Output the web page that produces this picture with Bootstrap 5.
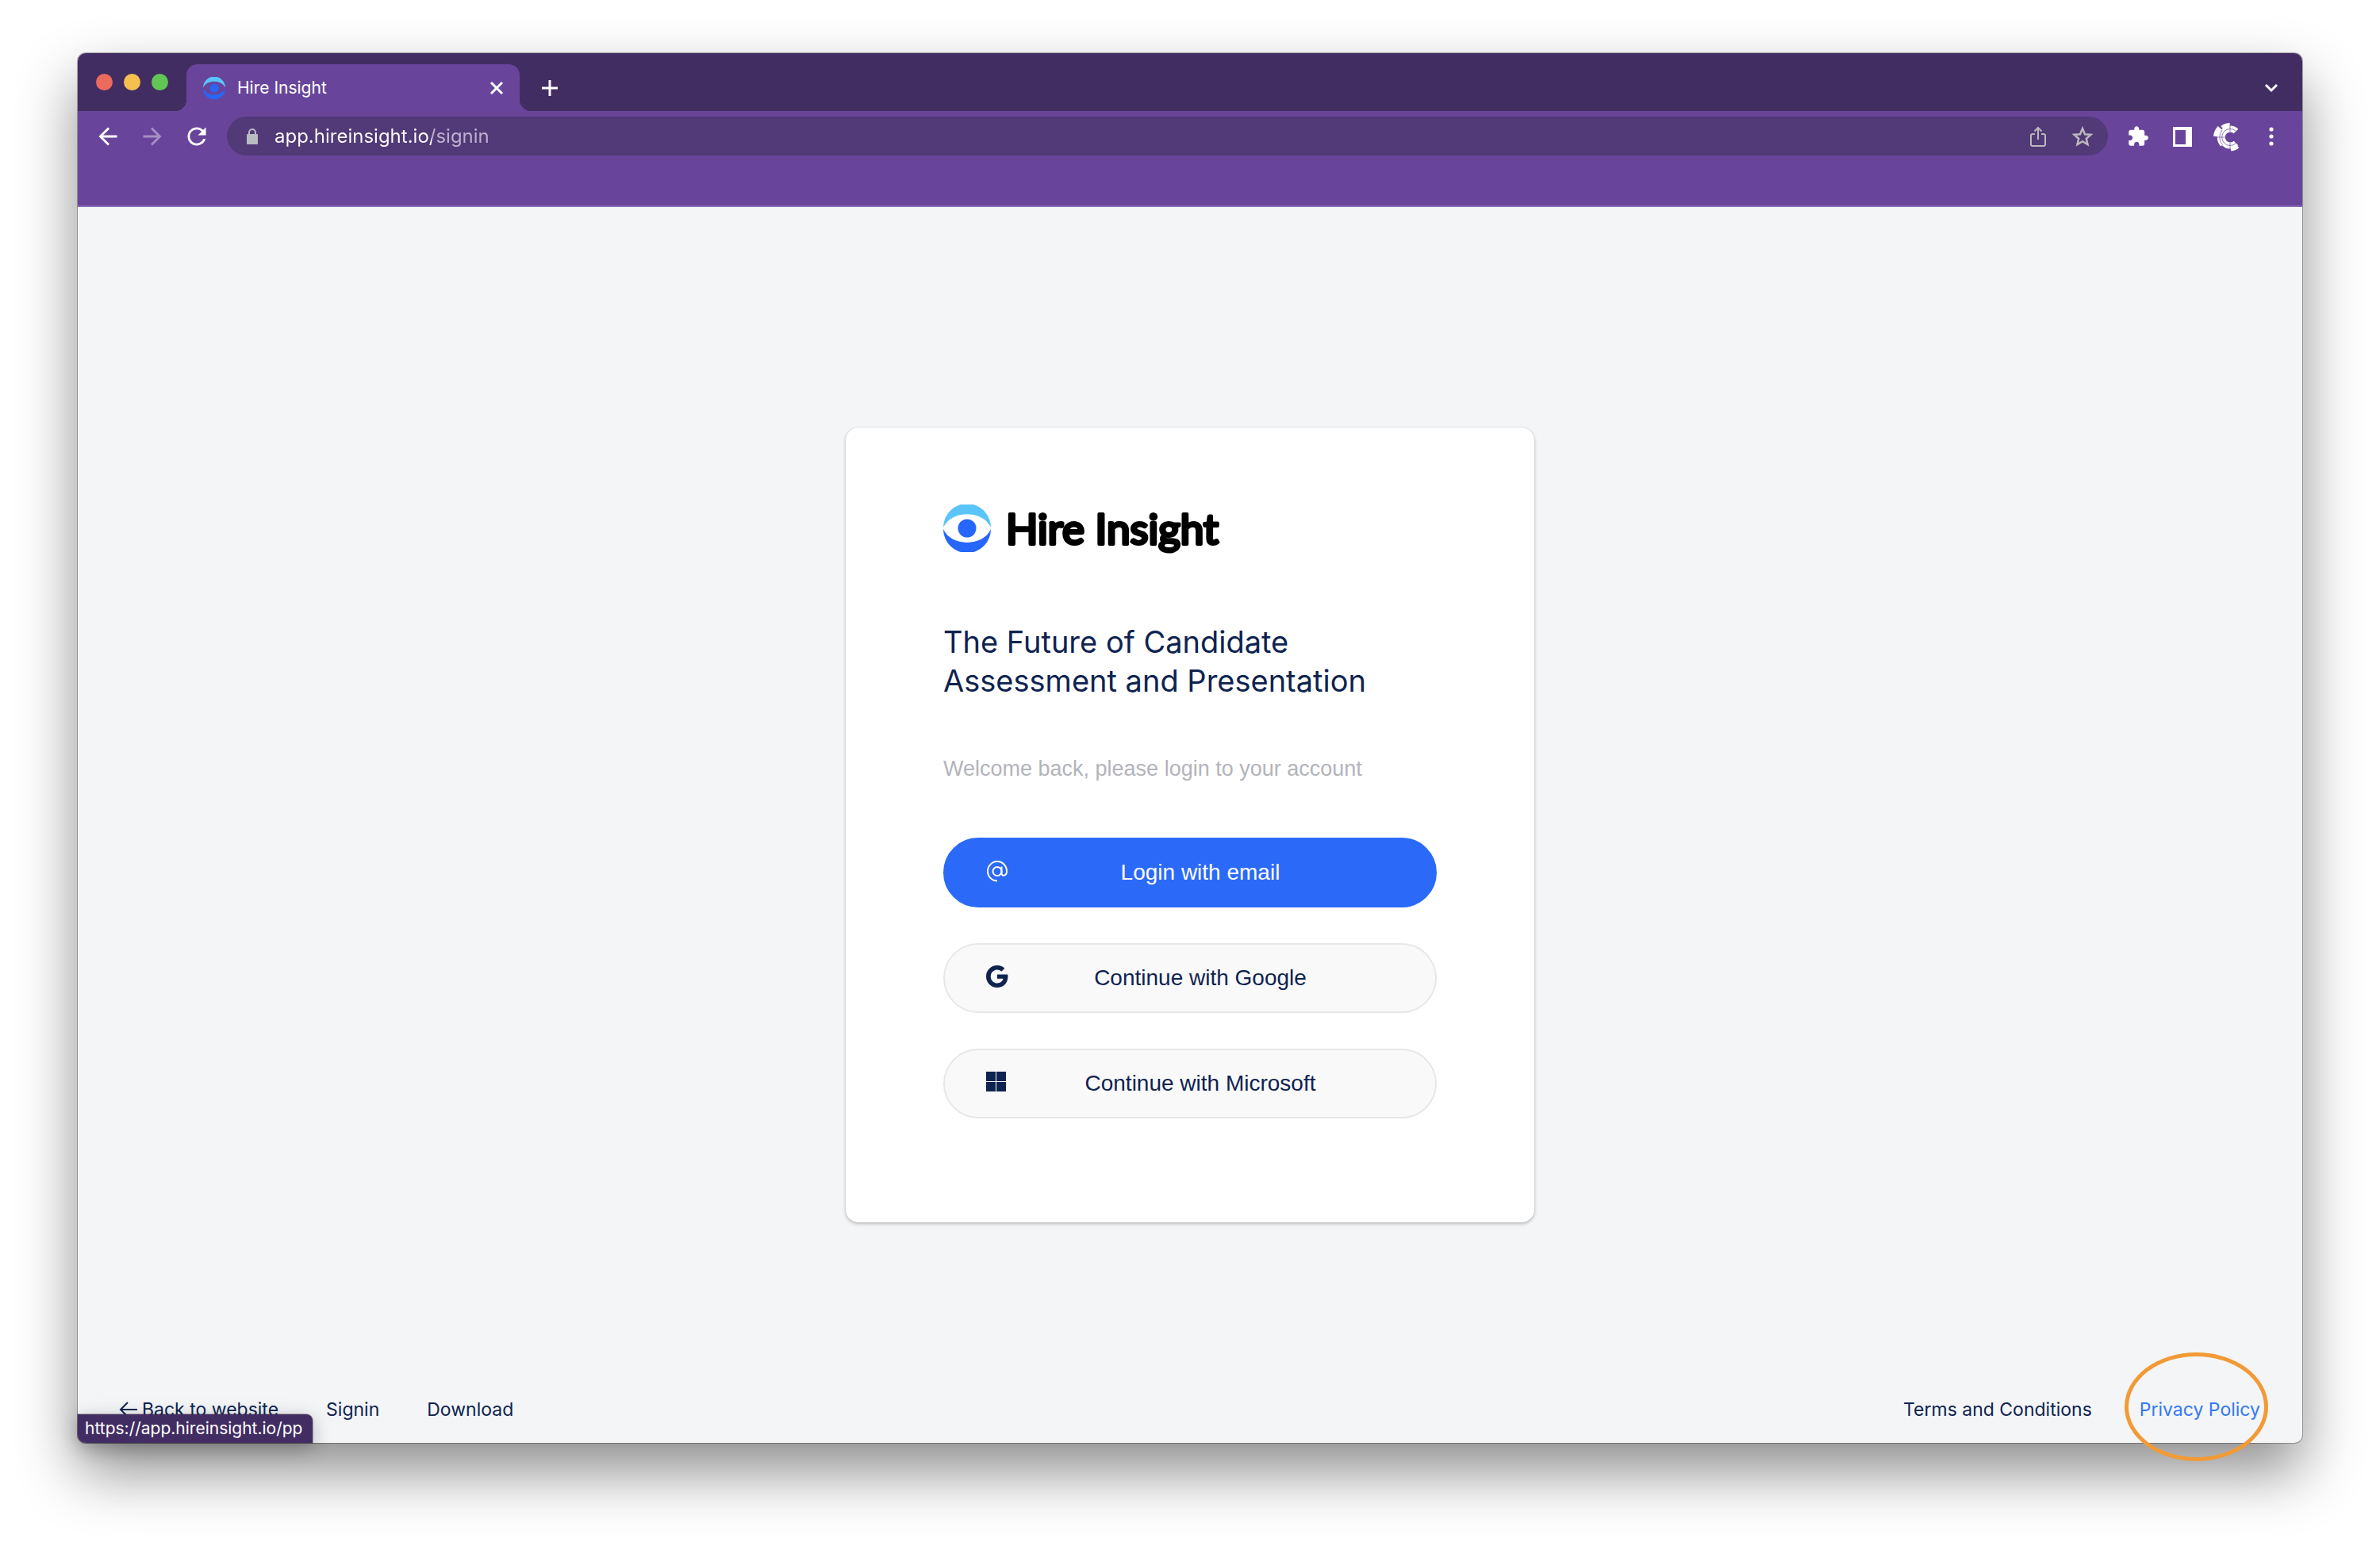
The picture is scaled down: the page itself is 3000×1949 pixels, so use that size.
<!DOCTYPE html>
<html lang="en">
<head>
<meta charset="utf-8">
<meta name="viewport" content="width=device-width, initial-scale=1">
<title>Hire Insight</title>
<link href="https://cdn.jsdelivr.net/npm/bootstrap@5.3.0/dist/css/bootstrap.min.css" rel="stylesheet">
<style>
  :root { --navy: #0f2350; --violet: #68459b; --violet-dark: #422d63; --brand: #2b6af8; }
  body { background: #fff; font-family: Inter, Roboto, sans-serif; color: var(--navy); min-height: 100vh; padding: 67px 98px 130px; }
  svg { display: block; flex: none; overflow: visible; }
  a { color: inherit; text-decoration: none; }
  .browser { border-radius: 10px; background: #f3f5f7; box-shadow: 0 0 0 1px rgba(0,0,0,.28), 0 36px 76px rgba(0,0,0,.45); }

  /* tab strip */
  .tab-strip { height: 73px; padding: 0 25px 0 23px; background: var(--violet-dark); border-radius: 10px 10px 0 0; }
  .light-dot { width: 21px; height: 21px; border-radius: 50%; }
  .lights { gap: 14px; margin-right: 23px; }
  .browser-tab { width: 420px; height: 59px; padding: 0 15px 0 21px; gap: 15px; background: var(--violet); border-radius: 14px 14px 0 0; font-size: 21px; }
  .browser-tab::before, .browser-tab::after { content: ""; position: absolute; bottom: 0; width: 14px; height: 14px; }
  .browser-tab::before { right: 100%; background: radial-gradient(circle at 0 0, transparent 14px, var(--violet) 14px); }
  .browser-tab::after { left: 100%; background: radial-gradient(circle at 100% 0, transparent 14px, var(--violet) 14px); }
  .strip-btn { height: 59px; }
  .tool-btn { padding: 0; border: 0; background: none; color: #fff; display: flex; align-items: center; }

  /* toolbar */
  .toolbar { height: 121px; padding: 7px 25px 0 24px; background: var(--violet); border-bottom: 2px solid #8a6bb3; }
  .tool-row { height: 49px; gap: 24px; }
  .tool-set { gap: 28px; }
  .address { height: 49px; padding: 0 18px; gap: 14px; border-radius: 25px; background: #523977; color: #bdb8c0; }
  .address input { border: 0; outline: 0; padding: 0; font-size: 24px; min-width: 0; color: transparent; background: linear-gradient(90deg, #fff 198px, #bfb2cf 198px); -webkit-background-clip: text; background-clip: text; }

  /* page: equal rows above and below keep the card in the middle */
  .page { display: grid; grid-template-rows: 1fr auto 1fr; min-height: calc(100vh - 391px); }
  .signin { width: 868px; max-width: 100%; padding: 97px 123px 131px; border-radius: 16px; background: #fff; box-shadow: 0 2px 4px rgba(0,0,0,.24), 0 0 2px rgba(0,0,0,.12); }
  .brand-name { font: 400 53px Lato, sans-serif; stroke: #000; stroke-width: 4px; stroke-linejoin: round; }
  .signin h1 { font: 400 38px/49px Inter, sans-serif; margin: 88px 0 66px; }
  .signin p { font: 400 27px/40px "Liberation Sans", Arial, sans-serif; color: #b3b4bb; margin-bottom: 67px; }
  .choices { gap: 45px; }
  .choice { height: 88px; padding: 0 54px 0 52px; border: 2px solid #e7e7e8; background: #f9f9f9; color: var(--navy); font: 400 28px/40px "Liberation Sans", Arial, sans-serif; }
  .choice:hover { border-color: #d5d5d8; color: var(--navy); }
  .choice-main, .choice-main:hover { background: var(--brand); border-color: var(--brand); color: #fff; }

  .page-foot { padding: 0 53px 28px; font-size: 23px; line-height: 28px; }
  .page-foot nav { gap: 60px; }
  .policy { color: #3478f6; }
  .ring { position: absolute; inset: -58px -10px -51px -19px; border: 5px solid #f29a36; border-radius: 50%; pointer-events: none; }
  .status { left: 0; bottom: 0; height: 36px; padding: 0 13px 0 9px; background: var(--violet-dark); color: #fff; font-size: 21px; line-height: 36px; border-radius: 0 8px 0 10px; box-shadow: 0 6px 24px rgba(0,0,0,.28), 0 0 0 1px rgba(0,0,0,.25); }
</style>
<script src="https://cdn.jsdelivr.net/npm/bootstrap@5.3.0/dist/js/bootstrap.bundle.min.js"></script>
</head>
<body>
<svg width="0" height="0" class="position-absolute" aria-hidden="true">
  <symbol id="eye" viewBox="0 0 60 60">
    <path d="M0 29A30 30 0 0 1 60 29C50 6.500 10 6.500 0 29Z" fill="#5ac4fb"/>
    <path d="M0 31A30 30 0 0 0 60 31C50 53.500 10 53.500 0 31Z" fill="#2766fb"/>
    <circle cx="30" cy="30" r="11.500" fill="#2766fb"/>
  </symbol>
</svg>

<div class="browser position-relative">
  <div class="tab-strip d-flex align-items-end">
    <div class="lights d-flex align-self-center">
      <span class="light-dot" style="background:#ec6b5f"></span>
      <span class="light-dot" style="background:#f5c04f"></span>
      <span class="light-dot" style="background:#62c655"></span>
    </div>
    <div class="browser-tab position-relative d-flex align-items-center text-white">
      <svg width="28" height="28" aria-hidden="true"><use href="#eye"/></svg>
      <span class="flex-grow-1">Hire Insight</span>
      <button type="button" class="tool-btn" aria-label="Close tab"><svg width="28" height="28" viewBox="0 0 28 28" stroke="#fff" stroke-width="3"><path d="M7 7L21 21M21 7L7 21"/></svg></button>
    </div>
    <button type="button" class="tool-btn strip-btn ms-4" aria-label="New tab"><svg width="28" height="28" viewBox="0 0 28 28" stroke="#fff" stroke-width="3"><path d="M14 4V24M4 14H24"/></svg></button>
    <button type="button" class="tool-btn strip-btn ms-auto" aria-label="Search tabs"><svg width="28" height="28" viewBox="0 0 28 28" fill="none" stroke="#fff" stroke-width="3"><path d="M7 10L14 17L21 10"/></svg></button>
  </div>

  <div class="toolbar">
    <div class="tool-row d-flex align-items-center">
      <div class="tool-set d-flex">
        <button type="button" class="tool-btn" aria-label="Back"><svg width="28" height="28" viewBox="2.300 2.300 19.400 19.400" fill="#fff"><path d="M20 11H7.830l5.590-5.590L12 4l-8 8 8 8 1.410-1.410L7.830 13H20v-2z"/></svg></button>
        <button type="button" class="tool-btn" aria-label="Forward"><svg width="28" height="28" viewBox="2.300 2.300 19.400 19.400" fill="#a48fc3"><path d="M4 11h12.170l-5.590-5.590L12 4l8 8-8 8-1.410-1.410L16.170 13H4v-2z"/></svg></button>
        <button type="button" class="tool-btn" aria-label="Reload"><svg width="28" height="28" viewBox="2.300 2.300 19.400 19.400" fill="#fff"><path d="M17.650 6.350C16.200 4.900 14.210 4 12 4c-4.420 0-7.990 3.580-7.990 8s3.570 8 7.990 8c3.730 0 6.840-2.550 7.730-6h-2.080c-.820 2.330-3.040 4-5.650 4-3.310 0-6-2.690-6-6s2.690-6 6-6c1.660 0 3.140.690 4.220 1.780L13 11h7V4l-2.350 2.350z"/></svg></button>
      </div>
      <div class="address d-flex align-items-center flex-grow-1">
        <svg width="28" height="28" viewBox="0 0 28 28" aria-hidden="true"><rect x="7" y="11" width="14" height="13" rx="1" fill="#b9bcc0"/><path d="M10 12V9a4 4 0 0 1 8 0v3" fill="none" stroke="#b9bcc0" stroke-width="2"/></svg>
        <input type="text" class="flex-grow-1" value="app.hireinsight.io/signin" aria-label="Address">
        <div class="tool-set d-flex">
          <button type="button" class="tool-btn" aria-label="Share"><svg width="28" height="28" viewBox="0 0 28 28" fill="none" stroke="#bdb8bd" stroke-width="2"><path d="M10 11H7a2 2 0 0 0-2 2v11a2 2 0 0 0 2 2H21a2 2 0 0 0 2-2V13a2 2 0 0 0-2-2H18M14 18V3M9.500 7.500L14 3L18.500 7.500"/></svg></button>
          <button type="button" class="tool-btn" aria-label="Bookmark"><svg width="28" height="28" viewBox="0 0 28 28" fill="none" stroke="#bdb8bd" stroke-width="2.500"><path d="M14 4L17 11.200L24.500 11.800L18.800 16.800L20.500 24.200L14 20.300L7.500 24.200L9.200 16.800L3.500 11.800L11 11.200Z"/></svg></button>
        </div>
      </div>
      <div class="tool-set d-flex align-items-center">
        <button type="button" class="tool-btn" aria-label="Extensions"><svg width="28" height="28" viewBox="0 0 24 24" fill="#fff"><path d="M20.500 11H19V7c0-1.100-.900-2-2-2h-4V3.500C13 2.120 11.880 1 10.500 1S8 2.120 8 3.500V5H4c-1.100 0-1.990.900-1.990 2v3.800H3.500c1.490 0 2.700 1.210 2.700 2.700s-1.210 2.700-2.700 2.700H2V20c0 1.100.900 2 2 2h3.800v-1.500c0-1.490 1.210-2.700 2.700-2.700 1.490 0 2.700 1.210 2.700 2.700V22H17c1.100 0 2-.900 2-2v-4h1.500c1.380 0 2.500-1.120 2.500-2.500S21.880 11 20.500 11z"/></svg></button>
        <button type="button" class="tool-btn" aria-label="Side panel"><svg width="28" height="28" viewBox="0 0 28 28"><path d="M2 2H26V27H2ZM5 6V24H18V6Z" fill="#fff" fill-rule="evenodd"/></svg></button>
        <button type="button" class="tool-btn" aria-label="Profile"><svg width="28" height="28" viewBox="-18 -15 28 28" fill="none" stroke="#fff">
          <path d="M7.500 -7.500A10.500 10.500 0 1 0 7.500 7.500" stroke-width="8"/>
          <path d="M-10 -9A14 14 0 0 0 -9.500 9.500" stroke-width="6"/>
          <path d="M9 10.700A14 14 0 0 1 1 14" stroke-width="7"/>
          <path d="M0 -15.500A15.500 15.500 0 0 0 -10 -12" stroke-width="5"/>
          <path d="M-13 -12A18 18 0 0 0 -18 -1" stroke-width="6"/>
          <path d="M-20 0H-7M0 -18V-7M0 7V17M7.500 -7.500A10.500 10.500 0 1 0 7.500 7.500M-10 -9A14 14 0 0 0 -9.500 9.500" stroke="#68459b" stroke-width=".700"/>
        </svg></button>
        <button type="button" class="tool-btn" aria-label="Menu"><svg width="28" height="28" viewBox="0 0 28 28" fill="#fff"><circle cx="14" cy="5" r="2.600"/><circle cx="14" cy="14" r="2.600"/><circle cx="14" cy="23" r="2.600"/></svg></button>
      </div>
    </div>
  </div>

  <div class="page">
    <div></div>
    <main class="signin mx-auto">
      <svg width="350" height="61" viewBox="0 0 350 61" role="img" aria-label="Hire Insight">
        <use href="#eye" width="60" height="60"/>
        <text class="brand-name" x="79" y="50">Hire Insight</text>
      </svg>
      <h1>The Future of Candidate<br>Assessment and Presentation</h1>
      <p>Welcome back, please login to your account</p>
      <div class="choices d-grid">
        <button type="button" class="btn choice choice-main rounded-pill d-flex align-items-center">
          <svg class="mb-1" width="28" height="28" viewBox="0 0 28 28" fill="none" stroke="#fff" stroke-width="2" aria-hidden="true"><circle cx="14" cy="14.500" r="5.500"/><path d="M19.500 8.500V16.500C19.500 21.500 26 20.500 26 14.500A12 12.200 0 1 0 14 26.500"/></svg>
          <span class="flex-grow-1">Login with email</span>
        </button>
        <button type="button" class="btn choice rounded-pill d-flex align-items-center">
          <svg class="mb-1" width="28" height="28" viewBox="0 0 16 16" fill="currentColor" aria-hidden="true"><path d="M15.545 6.558a9.420 9.420 0 0 1 .139 1.626c0 2.434-.870 4.492-2.384 5.885h.002C11.978 15.292 10.158 16 8 16A8 8 0 1 1 8 0a7.689 7.689 0 0 1 5.352 2.082l-2.284 2.284A4.347 4.347 0 0 0 8 3.166c-2.087 0-3.860 1.408-4.492 3.304a4.792 4.792 0 0 0 0 3.063h.003c.635 1.893 2.405 3.301 4.492 3.301 1.078 0 2.004-.276 2.722-.764h-.003a3.702 3.702 0 0 0 1.599-2.431H8v-3.080h7.545z"/></svg>
          <span class="flex-grow-1">Continue with Google</span>
        </button>
        <button type="button" class="btn choice rounded-pill d-flex align-items-center">
          <svg class="mb-1" width="28" height="28" viewBox="0 0 28 28" fill="currentColor" aria-hidden="true"><path d="M0 1H12V13H0ZM13 1H25V13H13ZM0 14H12V26H0ZM13 14H25V26H13Z"/></svg>
          <span class="flex-grow-1">Continue with Microsoft</span>
        </button>
      </div>
    </main>
    <footer class="page-foot d-flex justify-content-between align-items-end">
      <nav class="d-flex" aria-label="Site">
        <a href="#" class="d-flex align-items-center"><svg width="28" height="24" viewBox="0 0 28 24" fill="none" stroke="currentColor" stroke-width="2" aria-hidden="true"><path d="M22 12H2M10 3L1 12L10 21"/></svg>Back to website</a>
        <a href="#">Signin</a>
        <a href="#">Download</a>
      </nav>
      <nav class="d-flex" aria-label="Legal">
        <a href="#">Terms and Conditions</a>
        <a href="#" class="policy position-relative">Privacy Policy<span class="ring"></span></a>
      </nav>
    </footer>
  </div>
  <div class="status position-absolute">https://app.hireinsight.io/pp</div>
</div>
</body>
</html>
